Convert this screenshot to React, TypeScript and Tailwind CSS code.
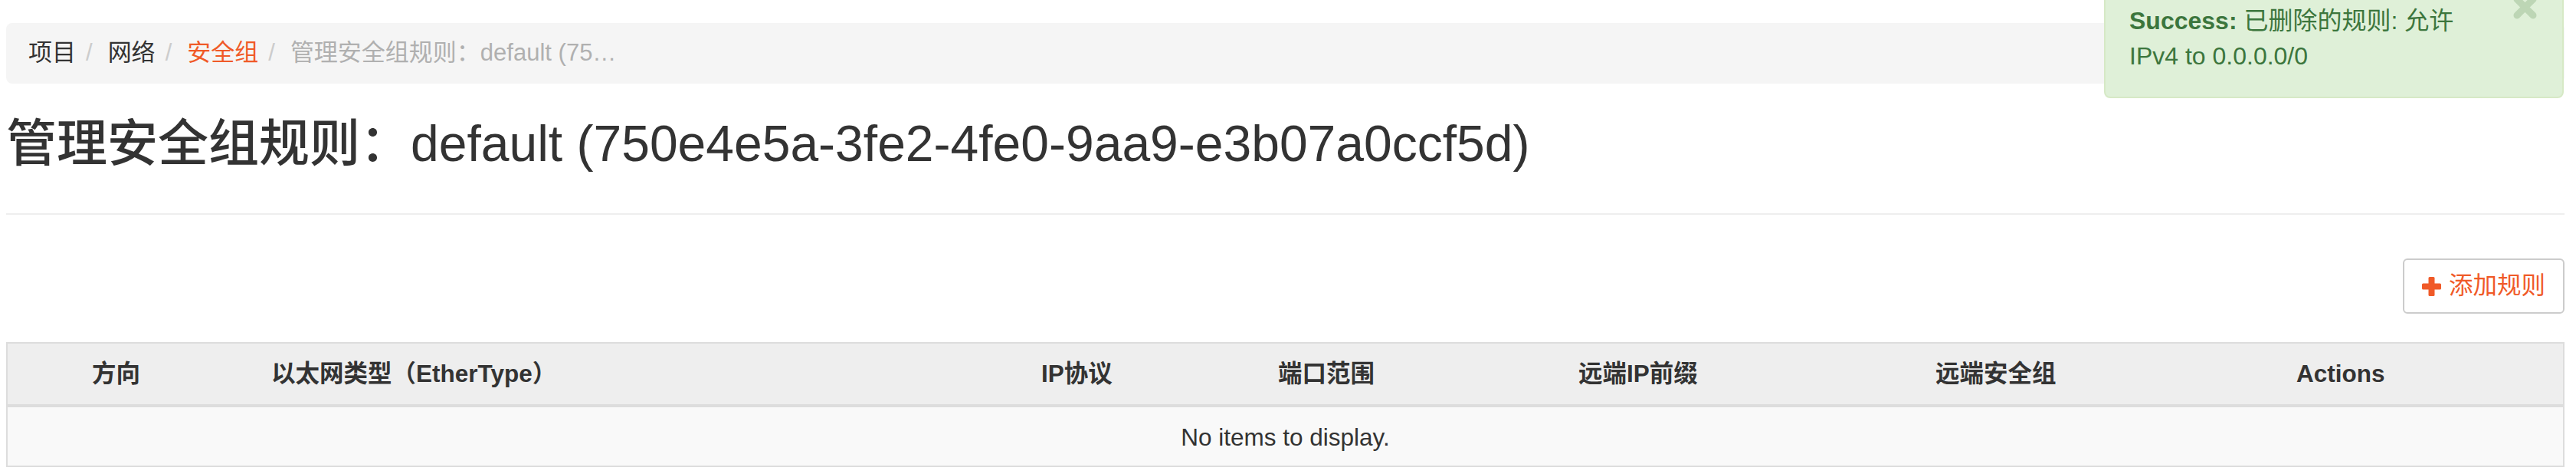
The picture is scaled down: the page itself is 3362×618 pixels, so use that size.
import React from "react";

const Sep = () => <span className="ml-[13px] mr-[20px] text-[#ccc]">/</span>;

const PlusIcon = () => (
  <svg width="25" height="25" viewBox="0 0 25 25" className="shrink-0">
    <rect x="8.5" y="0" width="8" height="25" rx="1.5" fill="#f05a28" />
    <rect x="0" y="8.5" width="25" height="8" rx="1.5" fill="#f05a28" />
  </svg>
);

const columns = [
  { label: "方向", width: "w-[345px] pl-[110px]" },
  { label: "以太网类型（EtherType）", width: "w-[1005px]" },
  { label: "IP协议", width: "w-[309px]" },
  { label: "端口范围", width: "w-[392px]" },
  { label: "远端IP前缀", width: "w-[466px]" },
  { label: "远端安全组", width: "w-[471px]" },
  { label: "Actions", width: "" },
];

export default function App() {
  return (
    <div className="relative w-[3362px] h-[618px] overflow-hidden bg-white pl-[8px] pr-[15px] font-['Liberation_Sans','Noto_Sans_CJK_SC',sans-serif] text-[#333]">
      {/* breadcrumb */}
      <div className="mt-[30px] h-[79px] flex items-center rounded-[8px] bg-[#f5f5f5] pl-[29px] text-[31px] whitespace-nowrap">
        <span className="text-[#333]">项目</span>
        <Sep />
        <span className="text-[#333]">网络</span>
        <Sep />
        <span className="text-[#f05a28]">安全组</span>
        <Sep />
        <span className="text-[#b0b0b0]">管理安全组规则：default (75…</span>
      </div>

      {/* page header */}
      <div className="pt-[42px] pb-[55px] border-b-2 border-[#eee]">
        <h1 className="text-[66px] leading-[72px] font-medium whitespace-nowrap">
          管理安全组规则：default (750e4e5a-3fe2-4fe0-9aa9-e3b07a0ccf5d)
        </h1>
      </div>

      {/* actions */}
      <div className="flex justify-end mt-[57px]">
        <button className="h-[72px] px-[23px] flex items-center gap-[10px] border-2 border-[#ccc] rounded-[6px] bg-white text-[31.5px] text-[#f05a28]">
          <PlusIcon />
          <span>添加规则</span>
        </button>
      </div>

      {/* table */}
      <table className="mt-[37px] w-full table-fixed border-collapse border-2 border-[#ddd] text-[31.5px]">
        <thead>
          <tr className="h-[82px] bg-[#eee] border-b-4 border-[#ddd]">
            {columns.map((c) => (
              <th key={c.label} className={`${c.width} text-left font-bold whitespace-nowrap`}>
                {c.label}
              </th>
            ))}
          </tr>
        </thead>
        <tbody>
          <tr className="h-[79px] bg-[#f9f9f9]">
            <td colSpan={7} className="text-center leading-[40px] pt-[2px]">
              No items to display.
            </td>
          </tr>
        </tbody>
      </table>

      {/* toast */}
      <div className="absolute top-[-28px] right-[16px] w-[600px] rounded-[8px] border-2 border-[#d6e9c6] bg-[#dff0d8] pl-[31px] pr-[75px] py-[30px] text-[32px] leading-[46px] text-[#3c763d]">
        <svg width="31" height="31" viewBox="0 0 31 31" className="absolute right-[33px] top-[20px]">
          <path d="M5 5 L26 26 M26 5 L5 26" stroke="#bdd6b5" strokeWidth="9" strokeLinecap="round" />
        </svg>
        <strong className="font-bold">Success:</strong> 已删除的规则: 允许
        <br />
        IPv4 to 0.0.0.0/0
      </div>
    </div>
  );
}
